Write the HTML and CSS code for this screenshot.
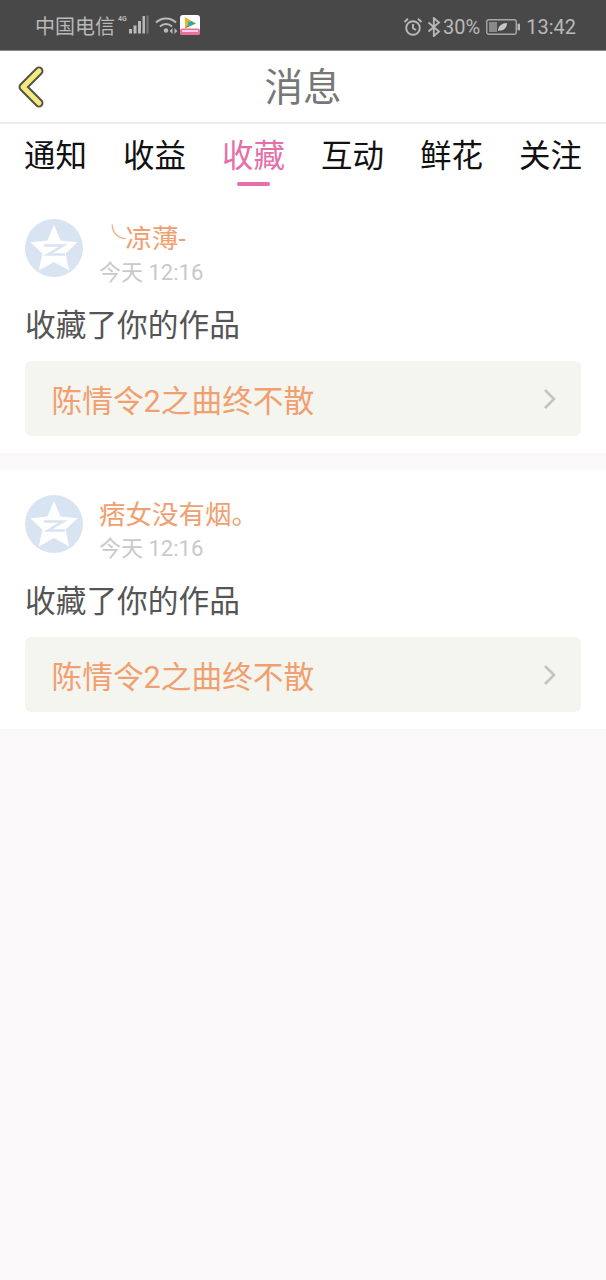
FILE: index.html
```html
<!DOCTYPE html>
<html lang="zh">
<head>
<meta charset="utf-8">
<title>消息</title>
<link rel="stylesheet" href="styles.css">
</head>
<body>
<div class="statusbar">
  <div class="st-left">
    <span class="carrier">中国电信</span>
    <svg class="ic-signal" width="31" height="20" viewBox="0 0 31 20"><text x="0" y="6" class="tiny">4G</text><rect x="11" y="14" width="3" height="4.500" fill="#b9b9b9"/><rect x="15.500" y="10.500" width="3" height="8" fill="#b9b9b9"/><rect x="20" y="6" width="3" height="12.500" fill="#b9b9b9"/><rect x="24.500" y="1" width="2.500" height="17.500" fill="#b9b9b9"/><rect x="28.500" y="0.500" width="2" height="18" fill="#777"/></svg>
    <svg class="ic-wifi" width="24" height="20" viewBox="0 0 24 20" fill="none" stroke="#b9b9b9" stroke-width="2"><path d="M1 6.500C6.500 1 15.500 1 21 6.500"/><path d="M5 10.500C8.500 7 13.500 7 17 10.500"/><circle cx="11" cy="14.500" r="2.200" fill="#b9b9b9" stroke="none"/><path d="M17.500 12v6l-2.800-3zM19.500 12v6l2.800-3z" fill="#b9b9b9" stroke="none"/></svg>
    <svg class="ic-app" width="20" height="20" viewBox="0 0 20 20"><rect width="20" height="20" rx="3" fill="#fff"/><path d="M5 2.500L16 8.500 5 13.500z" fill="#3fb04f"/><path d="M5 2.500L11 6 5 13.500z" fill="#f5b324"/><path d="M8 6L13 8.500 8 11z" fill="#3a9fe0"/><rect y="13.500" width="20" height="6.500" rx="2" fill="#e86fa0"/><rect x="2" y="15" width="16" height="2" fill="#f8cfe0"/></svg>
  </div>
  <div class="st-right">
    <svg width="20" height="20" viewBox="0 0 20 20" fill="none" stroke="#b9b9b9" stroke-width="1.900"><circle cx="10" cy="11" r="6.800"/><path d="M10 7v4.300l3 1.700"/><path d="M1.500 5L5 1.800M18.500 5L15 1.800"/></svg>
    <svg class="ic-bt" width="14" height="20" viewBox="0 0 14 20" fill="none" stroke="#b9b9b9" stroke-width="1.800"><path d="M1.500 5.500L12 14.500 6.800 19V1L12 5.500 1.500 14.500"/></svg>
    <span class="pct">30%</span>
    <svg class="ic-batt" width="34" height="16" viewBox="0 0 34 16"><rect x="0.750" y="0.750" width="29.500" height="14.500" rx="2" fill="none" stroke="#a8a8a8" stroke-width="1.400"/><rect x="3" y="3" width="8" height="10" fill="#8a8a8a"/><path d="M12 12C12 7 16 4 21 4 21 9 17 12 13.500 11.500z" fill="#c8c8c8"/><rect x="31.500" y="4.500" width="2.500" height="7" rx="1" fill="#b9b9b9"/></svg>
    <span class="time">13:42</span>
  </div>
</div>

<header class="nav">
  <svg class="back" width="30" height="44" viewBox="0 0 30 44"><path d="M23 6L7 22 23 38" fill="none" stroke="#55534a" stroke-width="9" stroke-linecap="round" stroke-linejoin="round"/><path d="M23 6L7 22 23 38" fill="none" stroke="#f5ea7c" stroke-width="5" stroke-linecap="round" stroke-linejoin="round"/></svg>
  <h1 class="title">消息</h1>
</header>

<nav class="tabs">
  <span class="tab">通知</span>
  <span class="tab">收益</span>
  <span class="tab active">收藏</span>
  <span class="tab">互动</span>
  <span class="tab">鲜花</span>
  <span class="tab">关注</span>
</nav>

<main class="list">
  <article class="card">
    <div class="user">
      <svg class="avatar" width="58" height="58" viewBox="0 0 58 58"><circle cx="29" cy="29" r="29" fill="#d8e4f2"/><path d="M29 6l6.600 15.500 17 1.700-12 11.300 3.600 17L29 43l-15.200 8.500 3.600-17-12-11.300 17-1.700z" fill="#fff"/><path d="M19 26.500h19L23 35.500h17" fill="none" stroke="#d8e4f2" stroke-width="2.600"/></svg>
      <div class="meta">
        <div class="name">╰凉薄-</div>
        <div class="date">今天 12:16</div>
      </div>
    </div>
    <p class="action">收藏了你的作品</p>
    <div class="work">
      <span class="work-title">陈情令2之曲终不散</span>
      <svg class="chev" width="14" height="22" viewBox="0 0 14 22"><path d="M2 2l9 9-9 9" fill="none" stroke="#c4c4bd" stroke-width="2.600"/></svg>
    </div>
  </article>
  <article class="card">
    <div class="user">
      <svg class="avatar" width="58" height="58" viewBox="0 0 58 58"><circle cx="29" cy="29" r="29" fill="#d8e4f2"/><path d="M29 6l6.600 15.500 17 1.700-12 11.300 3.600 17L29 43l-15.200 8.500 3.600-17-12-11.300 17-1.700z" fill="#fff"/><path d="M19 26.500h19L23 35.500h17" fill="none" stroke="#d8e4f2" stroke-width="2.600"/></svg>
      <div class="meta">
        <div class="name plain">痞女没有烟<span class="tc">。</span></div>
        <div class="date">今天 12:16</div>
      </div>
    </div>
    <p class="action">收藏了你的作品</p>
    <div class="work">
      <span class="work-title">陈情令2之曲终不散</span>
      <svg class="chev" width="14" height="22" viewBox="0 0 14 22"><path d="M2 2l9 9-9 9" fill="none" stroke="#c4c4bd" stroke-width="2.600"/></svg>
    </div>
  </article>
</main>
</body>
</html>
```
FILE: styles.css
```css
* { box-sizing: border-box; }
html, body { margin: 0; padding: 0; }
body {
  width: 606px;
  height: 1280px;
  overflow: hidden;
  background: #faf8f8;
  font-family: "Roboto", "Noto Sans CJK SC", sans-serif;
}
.statusbar {
  height: 51px;
  background: #484848;
  border-bottom: 1px solid #8c8c8c;
  color: #b9b9b9;
  display: flex;
  justify-content: space-between;
  align-items: center;
  padding: 3px 30px 0 35px;
}
.st-left, .st-right { display: flex; align-items: center; }
.carrier { font-size: 20px; line-height: 24px; }
.ic-signal { margin-left: 3px; margin-top: -3px; }
.tiny { font-size: 7px; font-weight: 700; fill: #b9b9b9; font-family: "Roboto", sans-serif; }
.ic-wifi { margin-left: 6px; margin-top: -1px; }
.ic-app { margin-left: 1px; margin-top: -3px; }
.ic-bt { margin-left: 4px; }
.pct { font-size: 20px; margin-left: 2px; }
.ic-batt { margin-left: 6px; }
.time { font-size: 20px; margin-left: 6px; }
.nav {
  height: 73px;
  background: #fff;
  border-bottom: 2px solid #ececec;
  display: flex;
  align-items: center;
  justify-content: center;
  padding-top: 2px;
  position: relative;
}
.back { position: absolute; left: 16px; top: 14px; }
.title {
  margin: 0;
  font-size: 38.500px;
  font-weight: 400;
  color: #777;
  line-height: 50px;
}
.tabs {
  height: 63px;
  background: #fff;
  display: flex;
  justify-content: space-between;
  padding: 0 24px;
}
.tab {
  font-size: 31.500px;
  color: #111;
  line-height: 66px;
  height: 62px;
  position: relative;
}
.active { color: #e56fa8; }
.active::after {
  content: "";
  position: absolute;
  left: 15px;
  right: 15px;
  bottom: 0;
  height: 4px;
  background: #e56fa8;
  border-radius: 2px;
}
.list { display: flex; flex-direction: column; gap: 17px; }
.card {
  background: #fff;
  height: 259px;
  padding: 25px 25px 0;
}
.card:first-child { margin-top: -1px; padding-top: 33px; height: 267px; }
.user { display: flex; height: 58px; }
.meta { margin-left: 16px; }
.name { font-size: 26.500px; line-height: 34px; color: #f0a070; margin-top: 3px; }
.plain { margin-top: 1px; }
.tc { font-family: "Noto Sans CJK TC", sans-serif; }
.date { font-size: 22px; line-height: 26px; color: #c9c9c9; margin-top: 4px; }
.action {
  margin: 26px 0 0;
  font-size: 30.700px;
  line-height: 46px;
  color: #555;
}
.work {
  margin-top: 12px;
  height: 75px;
  background: #f5f5ef;
  border-radius: 6px;
  display: flex;
  align-items: center;
  justify-content: space-between;
  padding: 0 24px 0 26.500px;
}
.work-title { font-size: 30.700px; color: #f0a070; }
```
